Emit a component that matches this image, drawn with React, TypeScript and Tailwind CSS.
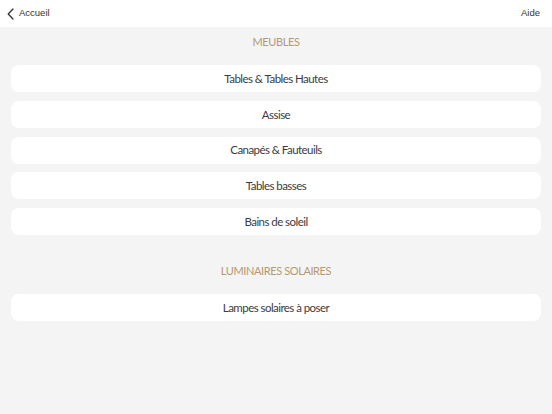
import * as React from "react";

const meubles = ["Tables & Tables Hautes", "Assise", "Canapés & Fauteuils", "Tables basses", "Bains de soleil"];
const luminaires = ["Lampes solaires à poser"];

function Section({ title, items }: { title: string; items: string[] }) {
  return (
    <section className="flex flex-col">
      <h2 className="h-[30px] flex items-center justify-center text-[11px] tracking-[-0.4px] text-[#b39a72]">{title}</h2>
      <div className="mt-[8px] flex flex-col gap-[8.75px] px-[11px]">
        {items.map((item) => (
          <div key={item} className="h-[27px] rounded-[8px] bg-white flex items-center justify-center text-[11.5px] tracking-[-0.55px] text-[#3c3c3c]">
            {item}
          </div>
        ))}
      </div>
    </section>
  );
}

export default function App() {
  return (
    <div className="w-[552px] h-[414px] bg-[#f4f4f4] flex flex-col" style={{ fontFamily: "Lato, 'Open Sans', sans-serif" }}>
      <header className="h-[27px] bg-white flex items-center justify-between pl-[7px] pr-[12px] text-[#333]" style={{ fontFamily: "'Liberation Sans', Arial, sans-serif" }}>
        <button className="flex items-center gap-[5px]">
          <svg width="7" height="12" viewBox="0 0 7 12" fill="none">
            <path d="M6 1L1.2 6L6 11" stroke="#333" strokeWidth="1.3" strokeLinecap="round" strokeLinejoin="round" />
          </svg>
          <span className="text-[9.5px]">Accueil</span>
        </button>
        <button className="text-[9.5px]">Aide</button>
      </header>
      <div className="flex flex-col">
        <Section title="MEUBLES" items={meubles} />
        <div className="h-[21px]" />
        <Section title="LUMINAIRES SOLAIRES" items={luminaires} />
      </div>
    </div>
  );
}
